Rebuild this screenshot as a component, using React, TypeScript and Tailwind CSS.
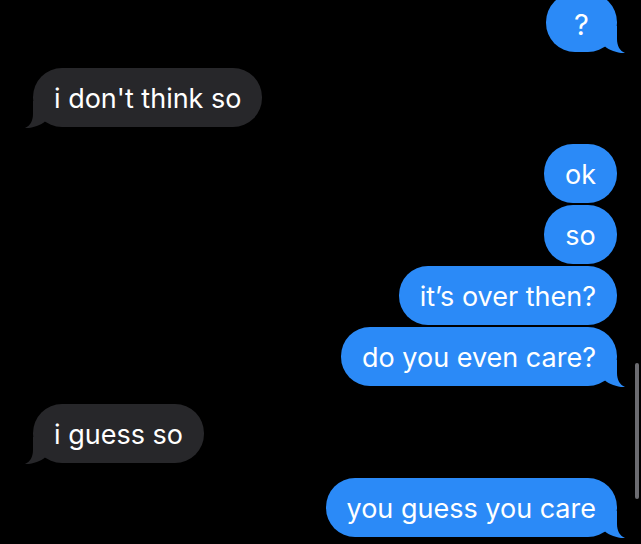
import type { ReactNode } from 'react';

type Side = 'me' | 'them';

function Tail({ side, color }: { side: Side; color: string }) {
  return (
    <svg
      width="30"
      height="28"
      viewBox="0 0 30 28"
      aria-hidden
      className={
        side === 'me'
          ? 'absolute bottom-[-2px] right-[-10px]'
          : 'absolute bottom-[-2px] left-[-10px] -scale-x-100'
      }
    >
      <path
        d="M4 0 L20 0 L20 13 C20 20 23 25 28 27 C21 27.5 12 24 8 20.5 L4 20.5 Z"
        fill={color}
      />
    </svg>
  );
}

function Bubble({
  side,
  tail = false,
  className = '',
  children,
}: {
  side: Side;
  tail?: boolean;
  className?: string;
  children: ReactNode;
}) {
  const isMe = side === 'me';
  return (
    <div
      className={`relative flex h-[59px] min-w-[71px] items-center justify-center rounded-[29px] px-[21px] pt-[4px] text-[27px] text-white ${
        isMe ? 'self-end bg-[#2b8af7]' : 'self-start bg-[#27272a]'
      } ${className}`}
    >
      {tail ? <Tail side={side} color={isMe ? '#2b8af7' : '#27272a'} /> : null}
      <span className="relative whitespace-nowrap">{children}</span>
    </div>
  );
}

export default function App() {
  return (
    <div className="relative h-[544px] w-[641px] overflow-hidden bg-black font-['Inter','Liberation_Sans',sans-serif]">
      <div className="flex flex-col pl-[33px] pr-[24px]">
        <Bubble side="me" tail className="-mt-[7px] text-[29px]">?</Bubble>

        <Bubble side="them" tail className="mt-[16px]">i don't think so</Bubble>

        <Bubble side="me" className="mt-[17px] min-w-[73px]">ok</Bubble>
        <Bubble side="me" className="mt-[2px] min-w-[73px]">so</Bubble>
        <Bubble side="me" className="mt-[2px]">it’s over then?</Bubble>
        <Bubble side="me" tail className="mt-[2px]">do you even care?</Bubble>

        <Bubble side="them" tail className="mt-[18px]">i guess so</Bubble>

        <Bubble side="me" tail className="mt-[15px]">you guess you care</Bubble>
      </div>

      <div className="absolute right-[2px] top-[363px] h-[136px] w-[4px] rounded-full bg-[#6b6b70]" />
    </div>
  );
}
